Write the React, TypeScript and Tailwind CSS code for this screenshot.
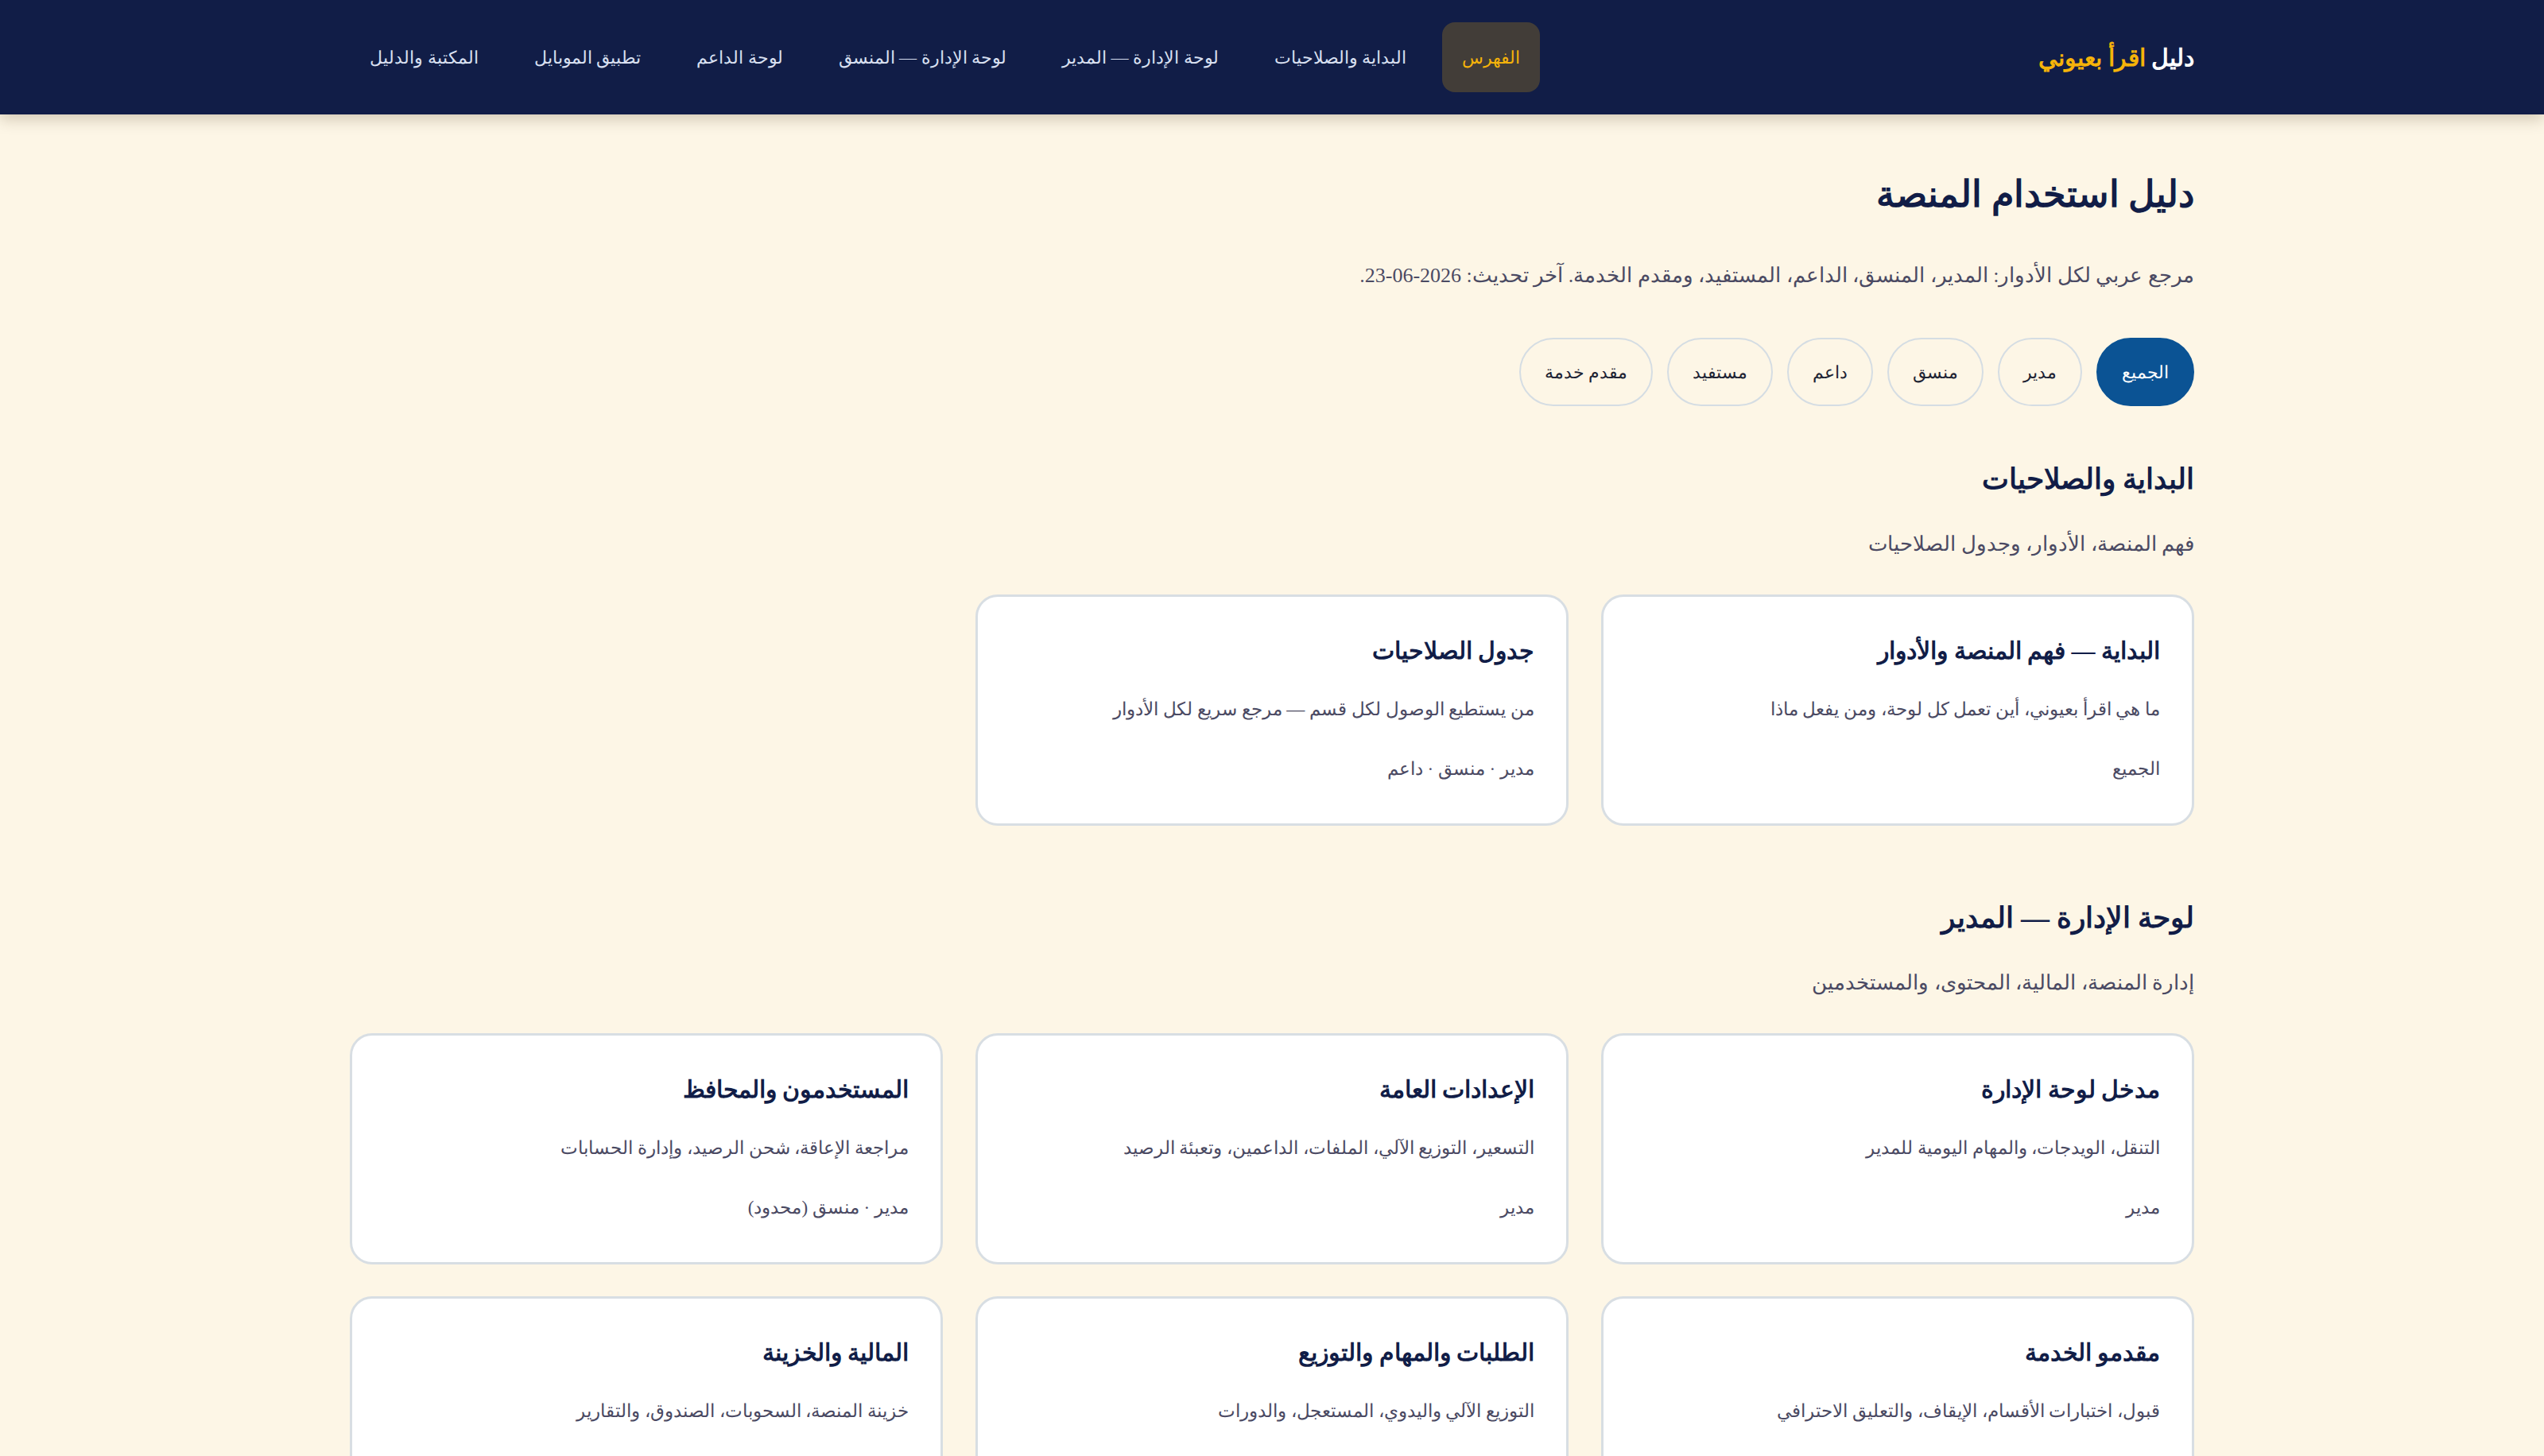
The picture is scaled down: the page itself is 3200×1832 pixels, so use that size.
import { useState } from 'react';

// --- DATA ---
const navLinks = [
  'الفهرس',
  'البداية والصلاحيات',
  'لوحة الإدارة — المدير',
  'لوحة الإدارة — المنسق',
  'لوحة الداعم',
  'تطبيق الموبايل',
  'المكتبة والدليل',
];

const roles = ['الجميع', 'مدير', 'منسق', 'داعم', 'مستفيد', 'مقدم خدمة'];

interface GuideCard {
  title: string;
  description: string;
  audience: string;
}

interface GuideSection {
  id: string;
  title: string;
  subtitle: string;
  cards: GuideCard[];
}

const sections: GuideSection[] = [
  {
    id: 'start',
    title: 'البداية والصلاحيات',
    subtitle: 'فهم المنصة، الأدوار، وجدول الصلاحيات',
    cards: [
      {
        title: 'البداية — فهم المنصة والأدوار',
        description: 'ما هي اقرأ بعيوني، أين تعمل كل لوحة، ومن يفعل ماذا',
        audience: 'الجميع',
      },
      {
        title: 'جدول الصلاحيات',
        description: 'من يستطيع الوصول لكل قسم — مرجع سريع لكل الأدوار',
        audience: 'مدير · منسق · داعم',
      },
    ],
  },
  {
    id: 'admin',
    title: 'لوحة الإدارة — المدير',
    subtitle: 'إدارة المنصة، المالية، المحتوى، والمستخدمين',
    cards: [
      {
        title: 'مدخل لوحة الإدارة',
        description: 'التنقل، الويدجات، والمهام اليومية للمدير',
        audience: 'مدير',
      },
      {
        title: 'الإعدادات العامة',
        description: 'التسعير، التوزيع الآلي، الملفات، الداعمين، وتعبئة الرصيد',
        audience: 'مدير',
      },
      {
        title: 'المستخدمون والمحافظ',
        description: 'مراجعة الإعاقة، شحن الرصيد، وإدارة الحسابات',
        audience: 'مدير · منسق (محدود)',
      },
      {
        title: 'مقدمو الخدمة',
        description: 'قبول، اختبارات الأقسام، الإيقاف، والتعليق الاحترافي',
        audience: 'مدير',
      },
      {
        title: 'الطلبات والمهام والتوزيع',
        description: 'التوزيع الآلي واليدوي، المستعجل، والدورات',
        audience: 'مدير · منسق',
      },
      {
        title: 'المالية والخزينة',
        description: 'خزينة المنصة، السحوبات، الصندوق، والتقارير',
        audience: 'مدير',
      },
    ],
  },
];

export default function App() {
  const [activeRole, setActiveRole] = useState('الجميع');

  return (
    <div
      dir="rtl"
      className="min-h-screen bg-[#fdf6e6] font-['Liberation_Serif',serif] text-[#111d47]"
    >
      {/* --- TOP BAR --- */}
      <header className="relative z-10 bg-[#111d47] shadow-[0_6px_18px_rgba(60,40,10,0.22)]">
        <div className="max-w-[2320px] mx-auto h-[144px] flex items-center justify-between">
          <div className="text-[30px] font-bold text-white whitespace-nowrap">
            دليل <span className="text-[#f5b30a]">اقرأ بعيوني</span>
          </div>

          <nav className="flex items-center gap-[20px]">
            {navLinks.map((link, i) => (
              <a
                key={link}
                href="#"
                className={
                  i === 0
                    ? 'h-[88px] px-[25px] rounded-[16px] flex items-center text-[22px] whitespace-nowrap bg-[#423d38] text-[#f5b30a]'
                    : 'h-[88px] px-[25px] rounded-[16px] flex items-center text-[22px] whitespace-nowrap text-[#d9e0f2]'
                }
              >
                {link}
              </a>
            ))}
          </nav>
        </div>
      </header>

      <main className="max-w-[2320px] mx-auto pt-[69px] pb-20">
        {/* --- PAGE INTRO --- */}
        <h1 className="text-[46px] leading-[64px] font-bold">دليل استخدام المنصة</h1>
        <p className="mt-[48px] text-[26px] leading-[44px] text-[#4b4a63]">
          مرجع عربي لكل الأدوار: المدير، المنسق، الداعم، المستفيد، ومقدم الخدمة. آخر تحديث: 2026-06-23.
        </p>

        {/* --- ROLE FILTER --- */}
        <div className="mt-[56px] flex items-center gap-[18px]">
          {roles.map((role) => (
            <button
              key={role}
              onClick={() => setActiveRole(role)}
              className={
                role === activeRole
                  ? 'h-[86px] px-[30px] rounded-full border-2 border-[#0b5394] bg-[#0b5394] text-white text-[22px]'
                  : 'h-[86px] px-[30px] rounded-full border-2 border-[#d5dde3] text-[#1e2433] text-[22px]'
              }
            >
              {role}
            </button>
          ))}
        </div>

        {/* --- SECTIONS --- */}
        {sections.map((section, idx) => (
          <section key={section.id} className={idx === 0 ? 'mt-[68px]' : 'mt-[92px]'}>
            <h2 className="text-[36px] leading-[48px] font-bold">{section.title}</h2>
            <p className="mt-[38px] text-[26px] leading-[40px] text-[#4b4a63]">{section.subtitle}</p>

            <div className="mt-[43px] grid grid-cols-3 gap-x-[41px] gap-y-[40px]">
              {section.cards.map((card) => (
                <CardItem key={card.title} card={card} />
              ))}
            </div>
          </section>
        ))}
      </main>
    </div>
  );
}

// --- CARD ---
function CardItem({ card }: { card: GuideCard }) {
  return (
    <a
      href="#"
      className="block bg-white border-[3px] border-[#d8dee3] rounded-[28px] px-[40px] pt-[44px] pb-[46px]"
    >
      <h3 className="text-[30px] leading-[48px] font-bold text-[#111d47]">{card.title}</h3>
      <p className="mt-[28px] text-[23px] leading-[44px] text-[#4b4a63]">{card.description}</p>
      <p className="mt-[31px] text-[23px] leading-[44px] text-[#4b4a63]">{card.audience}</p>
    </a>
  );
}
